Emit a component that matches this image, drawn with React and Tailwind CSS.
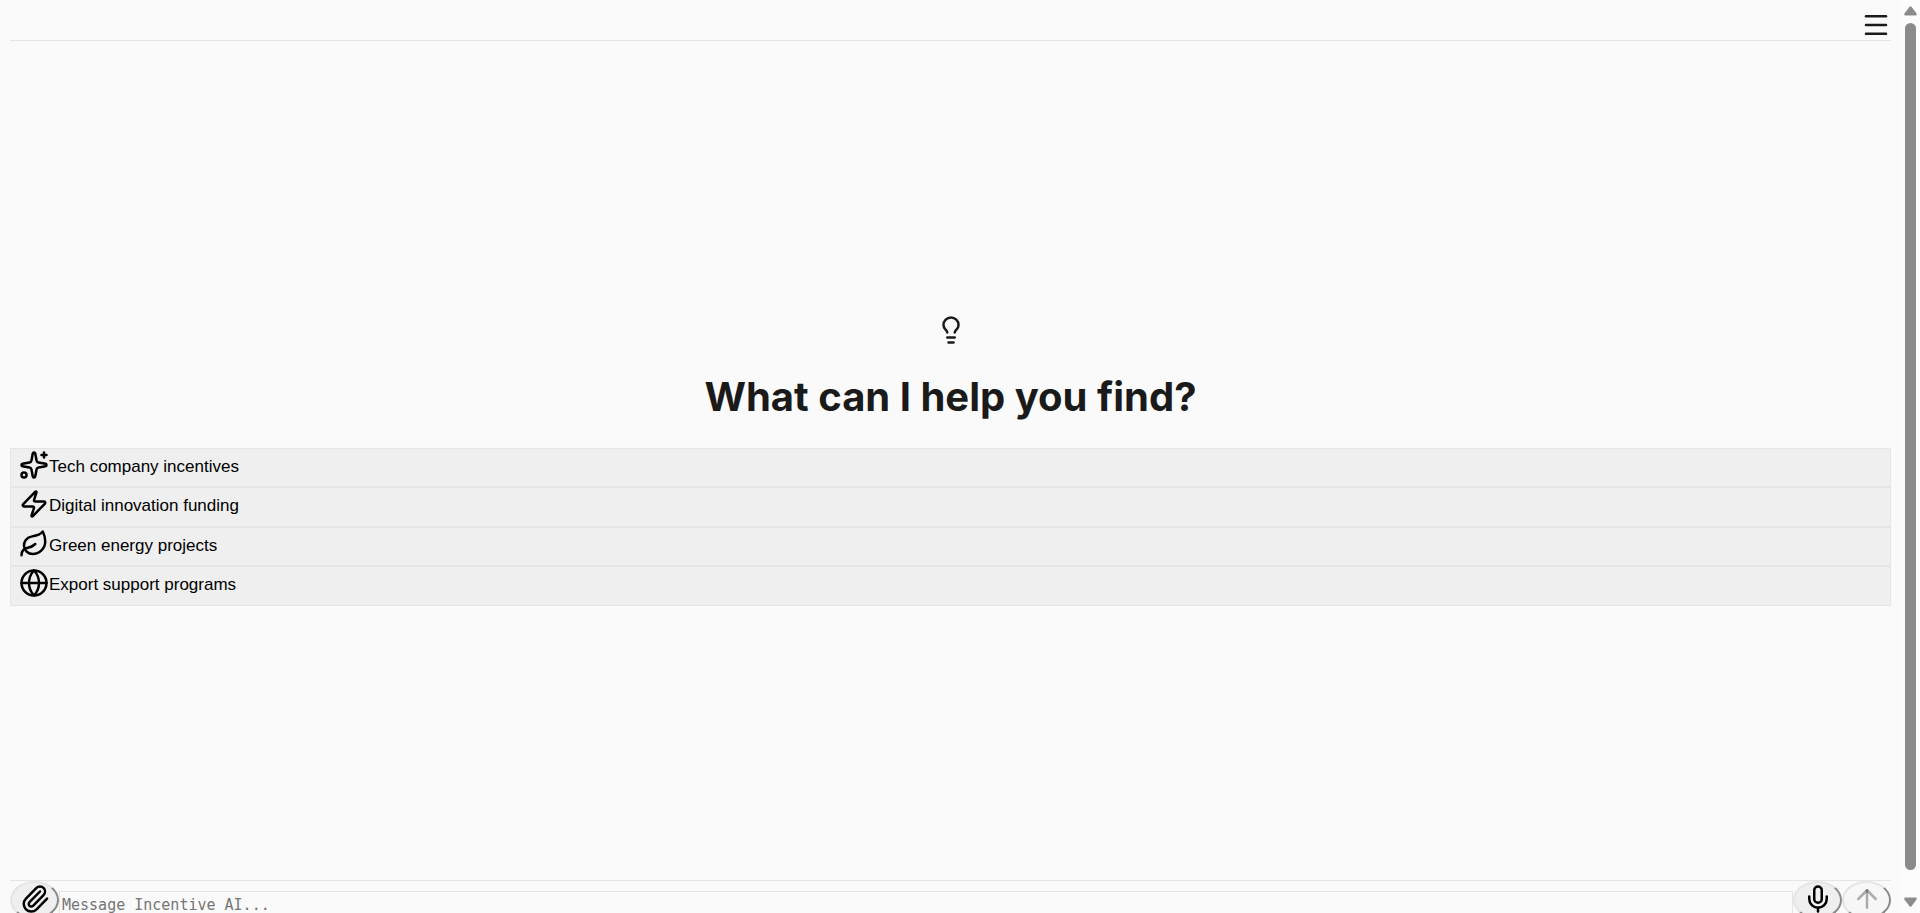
import { Menu, Lightbulb, Zap, Leaf, Globe, Paperclip, Mic, ArrowUp, Sparkles } from "lucide-react";

const suggestions = [
  { icon: Sparkles, label: "Tech company incentives" },
  { icon: Zap, label: "Digital innovation funding" },
  { icon: Leaf, label: "Green energy projects" },
  { icon: Globe, label: "Export support programs" },
];

const round =
  "flex h-[38px] w-[49px] shrink-0 items-start justify-center rounded-[50%] border-2 border-[#e5e5e5] border-r-[#8b8b8b] border-b-[#8b8b8b] pt-px";

export default function App() {
  return (
    <div className="flex h-screen overflow-hidden bg-[#fafafa] font-['Inter',sans-serif] text-[#1a1a1a]">
      <div className="flex min-w-0 flex-1 flex-col px-2.5">
        <header className="flex h-[41px] shrink-0 items-end justify-end border-b border-[#e5e5e5]">
          <button type="button" aria-label="Menu">
            <Menu size={30} />
          </button>
        </header>
        <main className="flex flex-1 flex-col justify-center">
          <Lightbulb size={30} className="self-center" />
          <h1 className="mt-7 mb-[27px] text-center text-[40px] leading-12 font-bold">
            What can I help you find?
          </h1>
          <div className="flex flex-col">
            {suggestions.map(({ icon: Icon, label }) => (
              <button
                key={label}
                type="button"
                className="flex h-[39px] items-start border border-[#e5e5e5] bg-[#efefef] px-2 pt-px text-left font-['Liberation_Sans',sans-serif] text-[17px] text-black even:h-10"
              >
                <Icon size={30} />
                <span className="leading-[33px]">{label}</span>
              </button>
            ))}
          </div>
        </main>
        <footer className="flex h-[33px] shrink-0 items-start border-t border-[#e5e5e5]">
          <button type="button" aria-label="Attach file" className={`${round} bg-[#efefef] text-black`}>
            <Paperclip size={30} />
          </button>
          <textarea
            aria-label="Message"
            placeholder="Message Incentive AI..."
            className="mt-2.5 h-12 min-w-0 flex-1 resize-none border border-[#e5e5e5] px-0.5 font-['DejaVu_Sans_Mono',monospace] text-[15px] leading-[26px] placeholder:text-[#757575]"
          />
          <button type="button" aria-label="Voice input" className={`${round} bg-[#efefef] text-black`}>
            <Mic size={30} />
          </button>
          <button type="button" aria-label="Send" disabled className={`${round} bg-[#f7f7f7] text-black/30`}>
            <ArrowUp size={30} />
          </button>
        </footer>
      </div>
      <div aria-hidden="true" className="flex w-[19px] shrink-0 flex-col items-center bg-[#fcfcfc] py-1.5">
        <svg width="13" height="10" viewBox="0 0 13 10" fill="#8b8b8b">
          <path d="M5.500 .7 Q6.500 -.4 7.500 .7 L12.600 7.500 Q13.200 9.500 11.500 9.500 H1.500 Q-.2 9.500 .4 7.500Z" />
        </svg>
        <div className="mt-[7px] mb-[27px] w-[11px] flex-1 rounded-full bg-[#8b8b8b]" />
        <svg width="13" height="10" viewBox="0 0 13 10" fill="#8b8b8b">
          <path d="M5.500 9.300 Q6.500 10.400 7.500 9.300 L12.600 2.500 Q13.200 .5 11.500 .5 H1.500 Q-.2 .5 .4 2.500Z" />
        </svg>
      </div>
    </div>
  );
}
